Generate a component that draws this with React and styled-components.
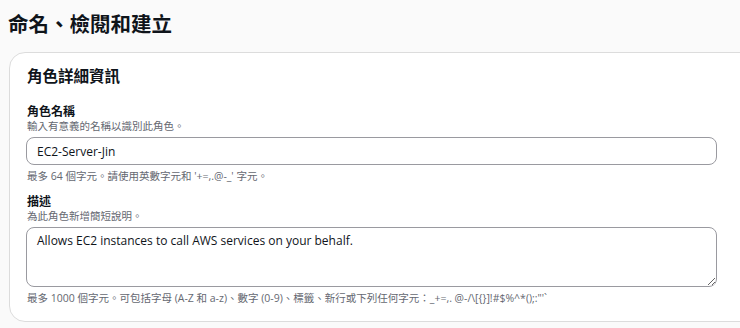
import React, { useState } from 'react';
import styled, { createGlobalStyle } from 'styled-components';

const GlobalStyle = createGlobalStyle`
    body {
        margin: 0;
        background-color: #fafafa;
        font-family: "Open Sans", "Noto Sans CJK TC", sans-serif;
        color: #0f141a;
        overflow: hidden;
    }
`;

const Pagina = styled.div`
    padding: 10px 0 0 8px;
`;

const Titulo = styled.h1`
    font-size: 20.5px;
    line-height: 28px;
    font-weight: 700;
    margin: 0 0 14px 0;
`;

const Cartao = styled.section`
    margin-left: 1px;
    width: 760px;
    background-color: #fff;
    border: 1px solid #dcdcdc;
    border-radius: 16px;
    padding: 13px 16px 16px 16px;
    box-sizing: border-box;
`;

const TituloCartao = styled.h2`
    font-size: 15.5px;
    line-height: 20px;
    font-weight: 700;
    margin: 0 0 18px 1px;
`;

const Campo = styled.div`
    width: 691px;
    margin-bottom: 11px;

    &:last-child {
        margin-bottom: 0;
    }
`;

const Label = styled.label`
    display: block;
    font-size: 12px;
    line-height: 15px;
    font-weight: 700;
    margin-left: 1px;
`;

const Descricao = styled.div`
    font-size: 10.5px;
    line-height: 14px;
    color: #656871;
    margin: 0 0 4px 1px;
`;

const Restricao = styled.div`
    font-size: 10.5px;
    line-height: 14px;
    color: #656871;
    margin: 4px 0 0 1px;
    white-space: nowrap;
`;

const Input = styled.input`
    display: block;
    width: 100%;
    height: 28px;
    padding: 0 10px;
    border: 1px solid #9a9aa0;
    border-radius: 8px;
    box-sizing: border-box;
    font-family: "Open Sans", "Noto Sans CJK TC", sans-serif;
    font-size: 12px;
    color: #0f141a;
    outline: none;
`;

const AreaTexto = styled.textarea`
    display: block;
    width: 100%;
    height: 60px;
    padding: 4px 10px;
    border: 1px solid #9a9aa0;
    border-radius: 8px;
    box-sizing: border-box;
    font-family: "Open Sans", "Noto Sans CJK TC", sans-serif;
    font-size: 12px;
    line-height: 18px;
    color: #0f141a;
    outline: none;
    resize: vertical;
`;

function App() {
    const [nome, setNome] = useState('EC2-Server-Jin');
    const [descricao, setDescricao] = useState('Allows EC2 instances to call AWS services on your behalf.');

    return (
        <Pagina>
            <GlobalStyle />
            <Titulo>命名、檢閱和建立</Titulo>
            <Cartao>
                <TituloCartao>角色詳細資訊</TituloCartao>
                <Campo>
                    <Label>角色名稱</Label>
                    <Descricao>輸入有意義的名稱以識別此角色。</Descricao>
                    <Input value={nome} onChange={(e) => setNome(e.target.value)} />
                    <Restricao>最多 64 個字元。請使用英數字元和 '+=,.@-_' 字元。</Restricao>
                </Campo>
                <Campo>
                    <Label>描述</Label>
                    <Descricao>為此角色新增簡短說明。</Descricao>
                    <AreaTexto value={descricao} onChange={(e) => setDescricao(e.target.value)} />
                    <Restricao>最多 1000 個字元。可包括字母 (A-Z 和 a-z)、數字 (0-9)、標籤、新行或下列任何字元：_+=,. @-/\[{'{}'}]!#$%^*();:"'`</Restricao>
                </Campo>
            </Cartao>
        </Pagina>
    );
}

export default App;
